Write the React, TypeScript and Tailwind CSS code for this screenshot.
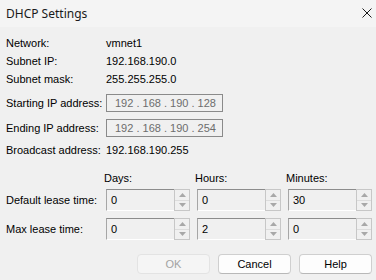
import type { ReactNode } from "react";

function SpinArrows() {
  return (
    <div className="flex h-full w-[16px] flex-col border border-[#c7c7c7] bg-[#f0f0f0]">
      <div className="flex flex-1 items-center justify-center border-b border-[#dcdcdc]">
        <svg width="7" height="4" viewBox="0 0 7 4">
          <path d="M0 4 L3.5 0 L7 4 Z" fill="#a8a8a8" />
        </svg>
      </div>
      <div className="flex flex-1 items-center justify-center">
        <svg width="7" height="4" viewBox="0 0 7 4">
          <path d="M0 0 L3.5 4 L7 0 Z" fill="#a8a8a8" />
        </svg>
      </div>
    </div>
  );
}

function SpinBox({ value }: { value: string }) {
  return (
    <div className="flex h-[22px] w-[84px]">
      <div className="flex flex-1 items-center border-t border-l border-b border-t-[#8c8c8c] border-l-[#a6a6a6] border-b-white bg-[#f0f0f0] pl-[4px] text-black">
        {value}
      </div>
      <SpinArrows />
    </div>
  );
}

function IpBox({ parts }: { parts: string[] }) {
  return (
    <div className="flex h-[18px] w-[117px] items-center border border-[#8a8a8a] bg-[#f0f0f0] pl-[8px] text-[#6d6d6d] whitespace-pre">
      {parts.join(" . ")}
    </div>
  );
}

function Row({ label, children, h = "h-[18px]" }: { label: string; children?: ReactNode; h?: string }) {
  return (
    <div className={`flex items-center ${h}`}>
      <div className="w-[100px] shrink-0">{label}</div>
      {children}
    </div>
  );
}

function Button({ label, disabled }: { label: string; disabled?: boolean }) {
  return (
    <button
      type="button"
      disabled={disabled}
      className={
        disabled
          ? "h-[20px] w-[73px] rounded-[4px] border border-[#e3e3e3] bg-[#f5f5f5] text-[#a3a3a3]"
          : "h-[20px] w-[73px] rounded-[4px] border border-[#cfcfcf] border-b-[#b8b8b8] bg-[#fdfdfd] text-black"
      }
    >
      {label}
    </button>
  );
}

export default function App() {
  return (
    <div className="h-[280px] w-[376px] overflow-hidden bg-[#f0f0f0] font-['Liberation_Sans',Arial,sans-serif] text-[11px] text-black">
      <div className="flex h-[27px] items-center justify-between bg-[#f4f4f4] pl-[6px] pr-[4px]">
        <span className="font-['Noto_Sans',sans-serif] text-[12px] text-[#1a1a1a]">DHCP Settings</span>
        <svg width="10" height="10" viewBox="0 0 10 10" className="mt-[-2px]">
          <path d="M0.5 0.5 L9.5 9.5 M9.5 0.5 L0.5 9.5" stroke="#1a1a1a" strokeWidth="1" />
        </svg>
      </div>

      <div className="px-[6px]">
        <div className="mt-[7px]">
          <Row label="Network:">vmnet1</Row>
          <Row label="Subnet IP:">192.168.190.0</Row>
          <Row label="Subnet mask:">255.255.255.0</Row>
        </div>

        <div className="mt-[6px]">
          <Row label="Starting IP address:">
            <IpBox parts={["192", "168", "190", "128"]} />
          </Row>
        </div>
        <div className="mt-[7px]">
          <Row label="Ending IP address:">
            <IpBox parts={["192", "168", "190", "254"]} />
          </Row>
        </div>
        <div className="mt-[4px]">
          <Row label="Broadcast address:">192.168.190.255</Row>
        </div>

        <div className="mt-[11px] flex h-[16px] items-center">
          <div className="w-[100px]" />
          <div className="grid grid-cols-[84px_84px_84px] gap-x-[7px]">
            <span>Days:</span>
            <span>Hours:</span>
            <span>Minutes:</span>
          </div>
        </div>

        <div className="mt-[3px]">
          <Row label="Default lease time:" h="h-[22px]">
            <div className="flex gap-[7px]">
              <SpinBox value="0" />
              <SpinBox value="0" />
              <SpinBox value="30" />
            </div>
          </Row>
        </div>
        <div className="mt-[7px]">
          <Row label="Max lease time:" h="h-[22px]">
            <div className="flex gap-[7px]">
              <SpinBox value="0" />
              <SpinBox value="2" />
              <SpinBox value="0" />
            </div>
          </Row>
        </div>

        <div className="mr-[-2px] mt-[14px] flex justify-end gap-[8px]">
          <Button label="OK" disabled />
          <Button label="Cancel" />
          <Button label="Help" />
        </div>
      </div>
    </div>
  );
}
